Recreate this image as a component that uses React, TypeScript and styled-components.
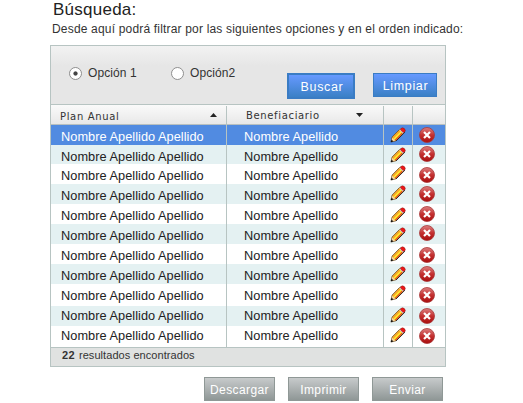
import React from 'react';
import styled, { createGlobalStyle, css } from 'styled-components';

const GlobalStyle = createGlobalStyle`
  * { box-sizing: border-box; }
  body {
    margin: 0;
    background: #fff;
    color: #333;
    font-family: "Liberation Sans", Arial, sans-serif;
    font-size: 12px;
  }
`;

const line = '#b7c4c2';

const Page = styled.main`
  width: 523px;
  height: 403px;
  padding-left: 50px;
  overflow: hidden;
`;

const Title = styled.h1`
  margin: 0 0 0 3px;
  height: 19px;
  font-size: 17px;
  font-weight: 400;
  line-height: 19px;
  letter-spacing: 0.25px;
  color: #222;
`;

const Subtitle = styled.p`
  margin: 0 0 0 2px;
  height: 26px;
  line-height: 20px;
  letter-spacing: 0.18px;
  white-space: nowrap;
`;

const Panel = styled.section`
  width: 396px;
  border: 1px solid ${line};
`;

const Filters = styled.div`
  display: flex;
  height: 59px;
  border-bottom: 1px solid ${line};
  background: linear-gradient(#f2f2f2, #e6e6e6 20px);
`;

const Option = styled.label<{ $width: number }>`
  display: flex;
  align-items: center;
  width: ${(p) => p.$width}px;
  height: 16px;
  margin-top: 19px;
  gap: 6px;
  letter-spacing: 0.1px;
  white-space: nowrap;
`;

const Radio = styled.span<{ $checked?: boolean }>`
  width: 13px;
  height: 13px;
  flex: none;
  border: 1px solid #8f8f8f;
  border-radius: 50%;
  background: ${(p) =>
    p.$checked ? 'radial-gradient(circle, #444 0 1.7px, #fff 2.5px)' : '#fff'};
`;

const OptionGroup = styled.div`
  display: flex;
  width: 236px;
  padding-left: 18px;
`;

const BlueButton = styled.button<{ $primary?: boolean }>`
  flex: none;
  width: ${(p) => (p.$primary ? 68 : 64)}px;
  height: ${(p) => (p.$primary ? 26 : 24)}px;
  margin: 27px ${(p) => (p.$primary ? 18 : 0)}px 0 0;
  padding: ${(p) => (p.$primary ? '1px 0 0 2px' : '1px 0 0 1px')};
  border: ${(p) => (p.$primary ? 2 : 1)}px solid #3a7cc4;
  background: linear-gradient(#6699ff, #3b80c6);
  color: #fff;
  font: 12.5px "Liberation Sans", Arial, sans-serif;
  letter-spacing: 0.65px;
`;

const columns = css`
  display: grid;
  grid-template-columns: 175px 157px 29px 33px;
`;

const Header = styled.div`
  ${columns}
  height: 20px;
  padding-top: 1px;
  border-bottom: 1px solid #b8c0c0;
  background: linear-gradient(#fafafa, #e8e8e8);
`;

const HeadCell = styled.div<{ $first?: boolean }>`
  display: flex;
  justify-content: space-between;
  padding: ${(p) => (p.$first ? '2px 9px 0 9px' : '1px 20px 0 19px')};
  border-left: 1px solid ${(p) => (p.$first ? 'transparent' : line)};
  margin-left: ${(p) => (p.$first ? -1 : 0)}px;
  font: 10px/18px "DejaVu Sans", Verdana, sans-serif;
  letter-spacing: 0.65px;
  white-space: nowrap;
`;

const SortMark = styled.i<{ $down?: boolean }>`
  width: 7px;
  height: 4px;
  margin-top: ${(p) => (p.$down ? 6 : 5)}px;
  background: #222;
  clip-path: ${(p) =>
    p.$down ? 'polygon(0 0, 100% 0, 50% 100%)' : 'polygon(50% 0, 100% 100%, 0 100%)'};
`;

const Row = styled.div<{ $height: number; $tone: string }>`
  ${columns}
  height: ${(p) => p.$height}px;
  background: ${(p) => p.$tone};
`;

const Cell = styled.div<{ $top: number; $left: number; $selected?: boolean; $divided?: boolean }>`
  padding: ${(p) => p.$top}px 0 0 ${(p) => p.$left}px;
  border-left: ${(p) => (p.$divided ? `1px solid ${line}` : '0')};
  color: ${(p) => (p.$selected ? '#fff' : '#222')};
  font-size: 12.75px;
  letter-spacing: 0.04px;
  line-height: 19px;
  white-space: nowrap;
  svg { display: block; }
`;

const Footer = styled.div`
  height: 19px;
  padding-left: 11px;
  border-top: 1px solid ${line};
  background: #e0e2e1;
  font-size: 11px;
  line-height: 15px;
  letter-spacing: 0.06px;
  b { margin-right: 1px; letter-spacing: 0.3px; }
`;

const Actions = styled.div`
  display: flex;
  gap: 13px;
  padding: 10px 0 0 154px;
`;

const GrayButton = styled.button`
  width: 71px;
  height: 24px;
  padding: 2px 0 0;
  border: 1px solid #8f9896;
  background: linear-gradient(#c7cacb, #8f9796);
  color: #fff;
  font: 12px "Liberation Sans", Arial, sans-serif;
  letter-spacing: 0.4px;
`;

const Pencil = () => (
  <svg width="16" height="16" viewBox="0 0 16 16">
    <path d="M1 15 2.1 10 10.2 1.8 14 5.6 6 13.8Z" fill="#f5a623" stroke="#5a4322" strokeWidth=".7" />
    <path d="M2.6 10.4 10.3 2.6 11.5 3.8 3.7 11.7Z" fill="#f7a72a" />
    <path d="M3.5 11.7 11.3 3.8 12.4 4.9 4.7 12.8Z" fill="#fff32e" />
    <path d="M4.7 12.8 12.3 5 13.4 6.1 5.8 13.8Z" fill="#e5601b" />
    <path d="M2.3 10.8 5.3 13.5 1 15Z" fill="#f6d5a0" />
    <path d="M.7 15.3 1.5 12.6 3.4 14.5Z" fill="#111" />
    <path d="M9.3 2.9 10.6 1.6 14.4 5.4 13.1 6.7Z" fill="#dfe8ef" />
    <path d="M10.5 1.9Q12.3-.2 14.3 1.5T14.4 5.6L13.2 5.6 10.5 3Z" fill="#ed1717" stroke="#701616" strokeWidth=".4" />
    <path d="M6 14 14.9 5.2" stroke="#252525" strokeWidth=".9" />
  </svg>
);

const Remove = () => (
  <svg width="16" height="16" viewBox="0 0 16 16">
    <defs>
      <linearGradient id="removeRed" x2="0" y2="1">
        <stop stopColor="#dc8080" />
        <stop offset=".5" stopColor="#c43131" />
        <stop offset="1" stopColor="#a90d0d" />
      </linearGradient>
    </defs>
    <circle cx="8" cy="8" r="7.5" fill="url(#removeRed)" stroke="#a83a3a" strokeWidth=".8" />
    <path d="m5 5 6 6m0-6-6 6" stroke="#fff" strokeWidth="2.2" />
  </svg>
);

const rows = [
  { height: 20, text: 2, edit: 2, remove: 2 },
  { height: 19, text: 2, edit: 2, remove: 1 },
  { height: 20, text: 2, edit: 1, remove: 3 },
  { height: 20, text: 2, edit: 1, remove: 2 },
  { height: 20, text: 2, edit: 3, remove: 2 },
  { height: 20, text: 2, edit: 3, remove: 1 },
  { height: 20, text: 2, edit: 2, remove: 3 },
  { height: 20, text: 2, edit: 2, remove: 2 },
  { height: 22, text: 2, edit: 1, remove: 3 },
  { height: 20, text: 0, edit: 1, remove: 2 },
  { height: 21, text: 0, edit: 1, remove: 2 },
];

const tone = (i: number) => (i === 0 ? '#518be1' : i % 2 ? '#e4f1f2' : '#fff');

export default function App() {
  return (
    <Page>
      <GlobalStyle />
      <Title>Búsqueda:</Title>
      <Subtitle>Desde aquí podrá filtrar por las siguientes opciones y en el orden indicado:</Subtitle>
      <Panel>
        <Filters>
          <OptionGroup>
            <Option $width={102}><Radio $checked />Opción 1</Option>
            <Option $width={80}><Radio />Opción2</Option>
          </OptionGroup>
          <BlueButton $primary>Buscar</BlueButton>
          <BlueButton>Limpiar</BlueButton>
        </Filters>
        <Header>
          <HeadCell $first>Plan Anual<SortMark /></HeadCell>
          <HeadCell>Benefiaciario<SortMark $down /></HeadCell>
          <HeadCell />
          <HeadCell />
        </Header>
        {rows.map((row, i) => (
          <Row key={i} $height={row.height} $tone={tone(i)}>
            <Cell $top={row.text} $left={10} $selected={i === 0}>Nombre Apellido Apellido</Cell>
            <Cell $top={row.text} $left={17} $selected={i === 0} $divided>Nombre Apellido</Cell>
            <Cell $top={row.edit} $left={6} $divided><Pencil /></Cell>
            <Cell $top={row.remove} $left={6} $divided><Remove /></Cell>
          </Row>
        ))}
        <Footer><b>22</b> resultados encontrados</Footer>
      </Panel>
      <Actions>
        <GrayButton>Descargar</GrayButton>
        <GrayButton>Imprimir</GrayButton>
        <GrayButton>Enviar</GrayButton>
      </Actions>
    </Page>
  );
}
